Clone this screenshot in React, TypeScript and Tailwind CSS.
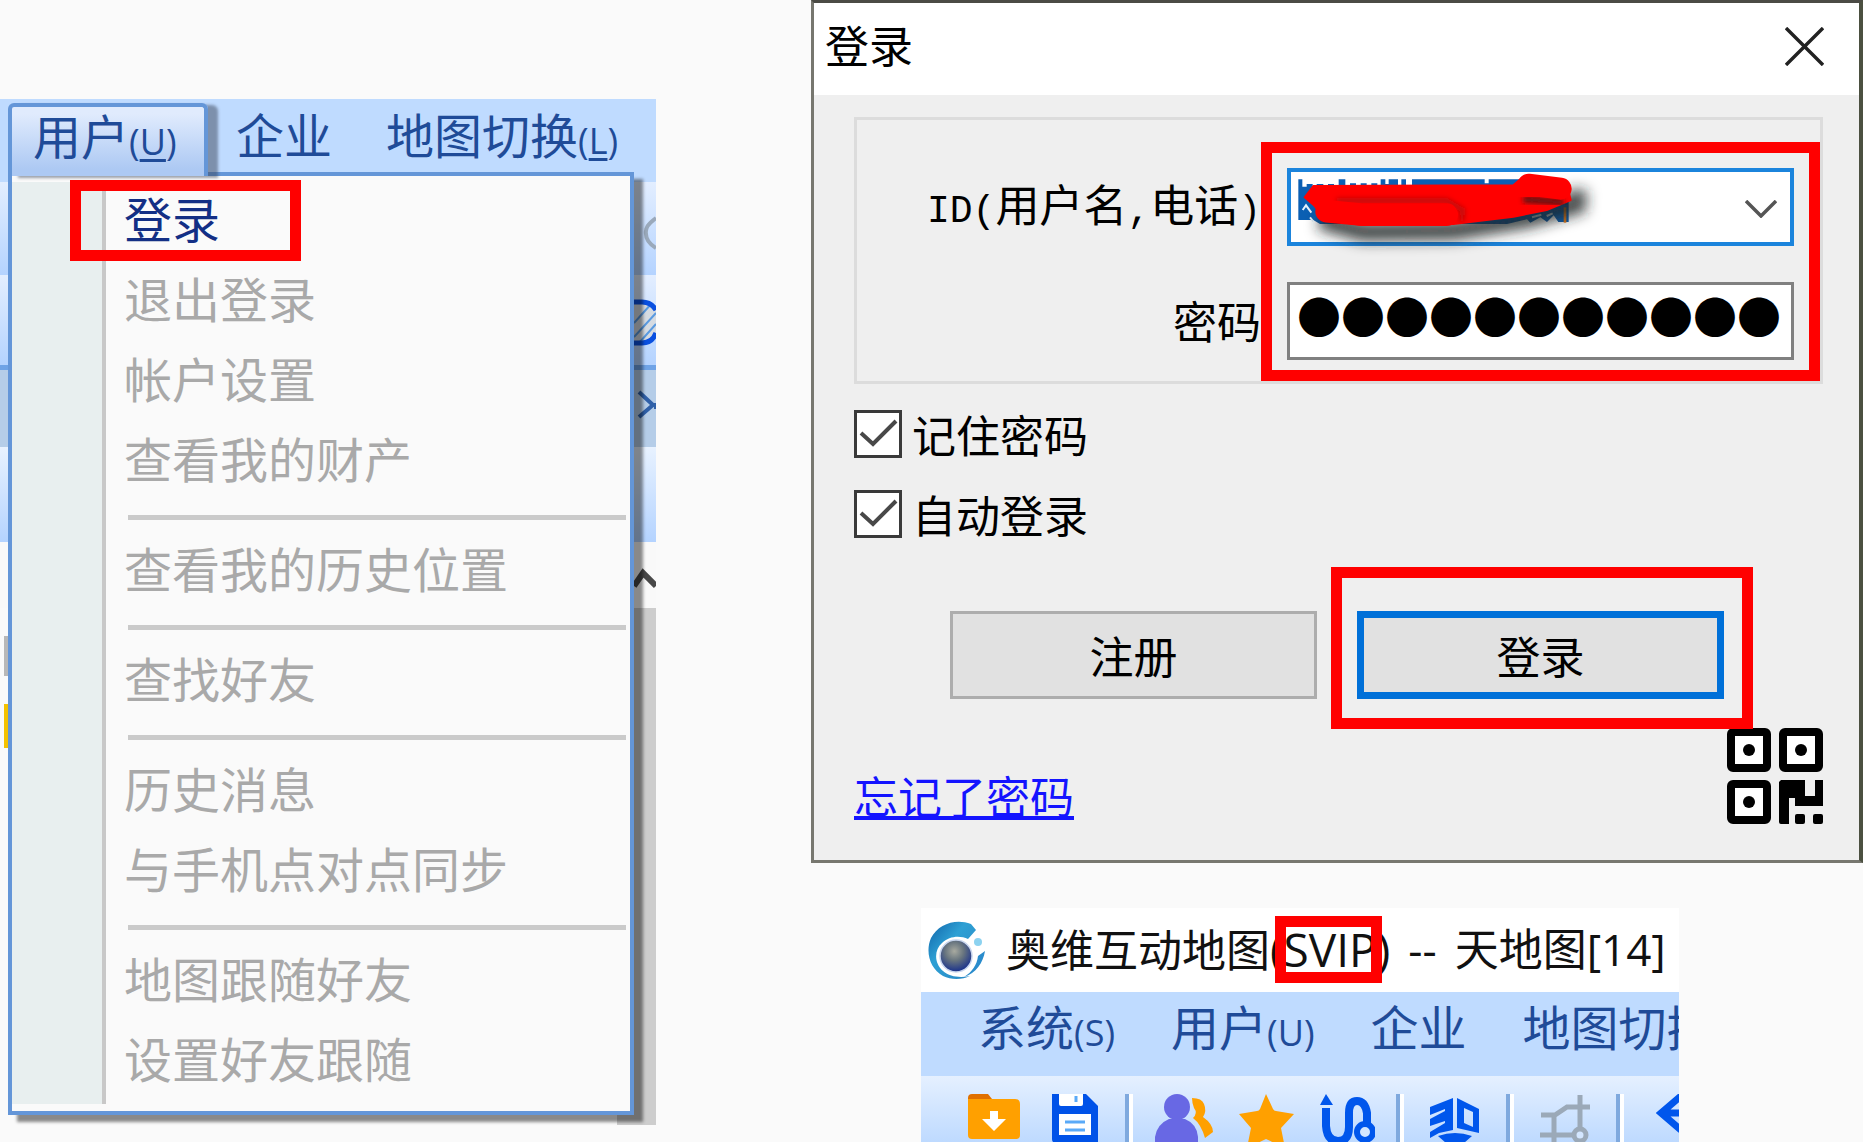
import type { ReactNode } from "react";
import { clsx } from "clsx";

const FONT = "font-['Open_Sans','Noto_Sans_CJK_SC',sans-serif]";
const CJK = "font-['Noto_Sans_CJK_SC',sans-serif]";

type MenuEntry = { label: string; disabled?: boolean; highlighted?: boolean } | "separator";

const userMenu: MenuEntry[] = [
  { label: "登录", highlighted: true },
  { label: "退出登录", disabled: true },
  { label: "帐户设置", disabled: true },
  { label: "查看我的财产", disabled: true },
  "separator",
  { label: "查看我的历史位置", disabled: true },
  "separator",
  { label: "查找好友", disabled: true },
  "separator",
  { label: "历史消息", disabled: true },
  { label: "与手机点对点同步", disabled: true },
  "separator",
  { label: "地图跟随好友", disabled: true },
  { label: "设置好友跟随", disabled: true },
];

function RedFrame({ className }: { className: string }) {
  return <div aria-hidden className={clsx("pointer-events-none absolute z-20 border-[11px] border-[#ff0000]", className)} />;
}

function MenuLabel({ text, hotkey, underline }: { text: string; hotkey?: string; underline?: boolean }) {
  return (
    <span className="flex items-baseline whitespace-nowrap text-[48px] leading-[60px] text-[#1f4b98]">
      {text}
      {hotkey && (
        <span className="text-[36px]">
          (<span className={clsx(underline && "underline decoration-[3px] underline-offset-4")}>{hotkey}</span>)
        </span>
      )}
    </span>
  );
}

// What stays visible of the main window behind the open menu
function Backdrop() {
  return (
    <div aria-hidden className="absolute inset-0 flex flex-col">
      <div className="h-[83px] bg-[#bfdbff]" />
      <div className="flex h-[93px] justify-end bg-linear-to-b from-[#e3eeff] to-[#b4d3ff]">
        <svg className="h-full w-[22px]" viewBox="0 0 22 93" fill="none">
          <path d="M22 36C14 42 11 46 12 52c0 7 5 11 10 14" stroke="#9aa9bb" strokeWidth="4" />
        </svg>
      </div>
      <div className="flex h-[90px] justify-end bg-linear-to-b from-[#e3eeff] to-[#b4d3ff]">
        <svg className="h-full w-[22px]" viewBox="0 0 22 90" fill="none">
          <path d="M0 27h10c6 0 9 2 12 5v30c-3 5-8 7-12 7H0z" fill="#d5dbe2" />
          <path d="M0 48 18 28M0 62 22 38M5 68 22 49" stroke="#5a9ae0" strokeWidth="2" />
          <path d="M0 27h8c7 0 11 3 14 8M22 58c-3 8-9 10-14 10H0" stroke="#0a50e0" strokeWidth="5" />
        </svg>
      </div>
      <div className="flex h-[82px] justify-end border-t-[5px] border-[#6fa3e6] bg-[#b5cde8]">
        <svg className="h-full w-[22px]" viewBox="0 0 22 77" fill="none">
          <path d="M5 22 19 35 5 47M22 33v6" stroke="#2f60a8" strokeWidth="4" />
        </svg>
      </div>
      <div className="h-[95px] bg-linear-to-b from-[#e8f2ff] to-[#b4d3ff]" />
      <div className="flex h-[66px] justify-end bg-[#f9f9f9]">
        <svg className="h-full w-[22px]" viewBox="0 0 22 66" fill="none">
          <path d="M0 44 9 31 22 44" stroke="#484848" strokeWidth="6" />
        </svg>
      </div>
      <div className="flex flex-1 items-start justify-between">
        <div className="flex flex-col items-end pt-7">
          <div className="h-10 w-2 border-r-4 border-[#b8b8b8]" />
          <div className="mt-7 h-11 w-2 border-r-4 border-[#f5c200]" />
        </div>
        <div className="h-full w-[39px] bg-[#cdcdcd]" />
      </div>
    </div>
  );
}

function UserMenu() {
  return (
    <section className="relative mt-[99px] self-start pb-[10px] pl-2 pr-[22px]">
      <Backdrop />
      <nav className="relative z-10 flex h-[73px] items-start">
        <button
          type="button"
          className="mt-1 flex h-[73px] w-[200px] shrink-0 items-start rounded-t-md border-4 border-b-0 border-[#6496d8] bg-linear-to-b from-[#e0ebfd] from-10% to-[#adc9f3] to-90% pl-[21px] shadow-[10px_2px_3px_rgba(60,70,90,0.5)]"
        >
          <MenuLabel text="用户" hotkey="U" underline />
        </button>
        <button type="button" className="ml-7 pt-[7px]">
          <MenuLabel text="企业" />
        </button>
        <button type="button" className="ml-[54px] pt-[7px]">
          <MenuLabel text="地图切换" hotkey="L" underline />
        </button>
      </nav>
      <div className="relative flex border-4 border-[#6496d8] bg-[#fafafa] pb-[7px] pt-1 shadow-[9px_7px_3px_rgba(0,0,0,0.45)]">
        <div aria-hidden className="mt-[2px] w-[94px] shrink-0 border-r-[4px] border-[#c8c8c8] bg-[#e8efef]" />
        <ul className="flex-1 pb-1">
          {userMenu.map((entry, i) =>
            entry === "separator" ? (
              <li key={i} role="separator" className="h-[30px] pl-[22px] pr-1 pt-[15px]">
                <div className="h-[5px] bg-[#cacaca]" />
              </li>
            ) : (
              <li key={i} className="relative h-20">
                <button
                  type="button"
                  disabled={entry.disabled}
                  className={clsx(
                    "h-full w-full whitespace-nowrap pl-[18px] text-left text-[48px] leading-[80px]",
                    entry.disabled ? "text-[#a9a9a9]" : "text-[#132f85]",
                  )}
                >
                  {entry.label}
                </button>
                {entry.highlighted && <RedFrame className="-left-9 top-0 h-[81px] w-[231px]" />}
              </li>
            ),
          )}
        </ul>
      </div>
    </section>
  );
}

function Scribble() {
  return (
    <svg aria-hidden className="pointer-events-none absolute -left-[7px] -top-2 h-[100px] w-80 overflow-visible" viewBox="0 0 960 300">
      <defs>
        <filter id="soft" x="-20%" y="-80%" width="140%" height="280%">
          <feGaussianBlur stdDeviation="20" />
        </filter>
        <filter id="fold" x="-30%" y="-60%" width="160%" height="220%">
          <feGaussianBlur stdDeviation="8" />
        </filter>
      </defs>
      <path
        d="M55 58h12v22h13v-8h18v8h12v-8h20v8h14v-8h18v8h14V58h20v20h14v-8h18v8h14v-8h18v8h14v-8h18v8h10V58h14v14h10V58h28v18h10V58h14v18h18V58h218v12h12V58h100v20h140v108H835l-14-20-20 20-20-14-30 16-10-10-60 14H120l-20-12H55z"
        fill="#0b5fb3"
      />
      <path d="M68 150l10-14 16 22M90 172l10 12M756 172l28-8M800 168l18-8" stroke="#e8f2fb" strokeWidth="6" fill="none" />
      <rect x="851" y="142" width="8" height="46" fill="#e07a1a" />
      <path d="M120 180 250 216 520 212 740 176 890 134 892 90" stroke="#1c2424" strokeOpacity="0.85" strokeWidth="56" fill="none" filter="url(#soft)" />
      <path d="M100 78 700 76 730 50 860 70 872 120 800 150 700 170 520 192 240 194 140 180 100 134 74 112Z" fill="#ff0000" stroke="#ff0000" strokeWidth="6" strokeLinejoin="round" />
      <path d="M170 122 500 122 548 150 545 184" stroke="#a01010" strokeWidth="14" strokeOpacity="0.75" fill="none" filter="url(#fold)" />
      <path d="M730 118 840 126 850 128" stroke="#401818" strokeWidth="20" strokeOpacity="0.85" fill="none" filter="url(#fold)" />
      <path d="M140 154 250 164 500 164" stroke="#ff0000" strokeWidth="68" strokeLinecap="round" strokeLinejoin="round" fill="none" />
      <path d="M746 74 842 86" stroke="#ff0000" strokeWidth="66" strokeLinecap="round" />
    </svg>
  );
}

function CheckOption({ id, children }: { id: string; children: ReactNode }) {
  return (
    <div className="flex items-center gap-[10px]">
      <span className="relative h-12 w-12">
        <input id={id} type="checkbox" defaultChecked className="peer block h-12 w-12 appearance-none border-[3px] border-[#3a3a3a] bg-white" />
        <svg aria-hidden className="pointer-events-none absolute inset-0 hidden h-12 w-12 peer-checked:block" viewBox="0 0 48 48" fill="none">
          <path d="M7 23 19 34 42 11" stroke="#484848" strokeWidth="4" />
        </svg>
      </span>
      <label htmlFor={id} className="text-[44px] leading-[48px]">
        {children}
      </label>
    </div>
  );
}

function QrIcon() {
  return (
    <svg aria-hidden className="h-24 w-24" viewBox="0 0 96 96">
      <g fill="#fff" stroke="#000" strokeWidth="8">
        <rect x="4" y="4" width="36" height="36" rx="2" />
        <rect x="56" y="4" width="36" height="36" rx="2" />
        <rect x="4" y="56" width="36" height="36" rx="2" />
      </g>
      <circle cx="22" cy="22" r="6" />
      <circle cx="74" cy="22" r="6" />
      <circle cx="22" cy="74" r="6" />
      <path d="M54 52h24v16h10V52h8v26H68v-8h-6v26h-8a2 2 0 0 1-2-2V54z" />
      <rect x="68" y="86" width="10" height="10" rx="2" />
      <rect x="86" y="86" width="10" height="10" rx="2" />
    </svg>
  );
}

function LoginDialog() {
  return (
    <form className={clsx("border-[3px] border-r-4 border-[#77776f] border-t-[#4b4b45] border-r-[#4b5040] bg-[#efefef] text-black", CJK)}>
      <header className="flex h-[92px] items-start justify-between bg-white pl-[11px] pr-[35px]">
        <h1 className="pt-[11px] text-[44px] leading-[60px]">登录</h1>
        <button type="button" aria-label="关闭" className="pt-6">
          <svg className="h-[39px] w-[39px]" viewBox="0 0 39 39" fill="none">
            <path d="M1 1 38 38M38 1 1 38" stroke="#222" strokeWidth="3.4" />
          </svg>
        </button>
      </header>

      <div className="pb-9 pl-10 pr-[36px] pt-[22px]">
        <fieldset className="flex justify-end gap-[26px] border-[3px] border-[#dcdcdc] pb-[21px] pr-[26px] pt-12">
          <div className="flex flex-col items-end gap-9 whitespace-nowrap text-[44px]">
            <label htmlFor="account" className="h-[78px] leading-[70px]">
              <span className="font-['Liberation_Mono',monospace] text-[38px]">ID(</span>用户名
              <span className="font-['Liberation_Mono',monospace] text-[38px]">,</span>电话
              <span className="font-['Liberation_Mono',monospace] text-[38px]">)</span>
            </label>
            <label htmlFor="password" className="h-[78px] leading-[76px]">
              密码
            </label>
          </div>
          <div className="relative flex w-[507px] flex-col gap-9">
            <div className="relative h-[78px]">
              <select id="account" className="h-full w-full appearance-none border-4 border-[#1b84dc] bg-white" />
              <svg aria-hidden className="pointer-events-none absolute right-[17px] top-8 h-[18px] w-8" viewBox="0 0 32 18" fill="none">
                <path d="M1 1 16 16 31 1" stroke="#555" strokeWidth="3.5" />
              </svg>
              <Scribble />
            </div>
            <div className="relative h-[78px]">
              <input id="password" type="password" defaultValue="00000000000" className="h-full w-full border-[3px] border-[#808080] bg-white px-2 text-transparent" />
              <span aria-hidden className="pointer-events-none absolute inset-0 overflow-hidden pl-[10px] text-[44px] leading-[66px]">
                ●●●●●●●●●●●
              </span>
            </div>
            <RedFrame className="-bottom-[21px] -left-[26px] -right-[26px] -top-[26px]" />
          </div>
        </fieldset>

        <div className="mt-[26px] flex flex-col gap-8">
          <CheckOption id="remember">记住密码</CheckOption>
          <CheckOption id="auto-login">自动登录</CheckOption>
        </div>

        <div className="mt-[73px] grid grid-cols-2 gap-10 pl-24 pr-[99px] text-[44px] leading-[70px]">
          <button type="button" className="h-[88px] border-[3px] border-[#adadad] bg-[#e1e1e1]">
            注册
          </button>
          <div className="relative h-[88px]">
            <button type="submit" className="h-full w-full border-[7px] border-[#0070d8] bg-[#e1e1e1]">
              登录
            </button>
            <RedFrame className="-bottom-[30px] -left-[26px] -right-[29px] -top-11" />
          </div>
        </div>

        <div className="mt-[29px] flex items-end justify-between">
          <a href="#forgot" className="text-[44px] leading-[58px] text-[#1414ff] underline decoration-4 underline-offset-2">
            忘记了密码
          </a>
          <button type="button" aria-label="扫码登录">
            <QrIcon />
          </button>
        </div>
      </div>
    </form>
  );
}

function GlobeLogo() {
  return (
    <svg aria-hidden className="h-[58px] w-[58px]" viewBox="0 0 58 58">
      <defs>
        <radialGradient id="earth" cx="45%" cy="35%" r="65%">
          <stop offset="0" stopColor="#a8aaa0" />
          <stop offset="0.45" stopColor="#68757f" />
          <stop offset="1" stopColor="#18308c" />
        </radialGradient>
        <linearGradient id="swoosh" x1="0" y1="0" x2="1" y2="1">
          <stop offset="0" stopColor="#0f62a8" />
          <stop offset="0.4" stopColor="#2ea0d4" />
          <stop offset="1" stopColor="#2a86c4" />
        </linearGradient>
      </defs>
      <path d="M43 3C28-3 10 3 3 17c-6 14-1 31 12 38 8 4 19 4 27 0-10 2-20 1-27-5C6 42 6 29 14 22c7-7 18-8 26-4l8-9z" fill="url(#swoosh)" />
      <path d="M57 30c-2 12-9 22-21 26 8-5 13-12 14-21z" fill="#2a8ccc" />
      <circle cx="28" cy="35" r="16" fill="url(#earth)" stroke="#c9d6ee" strokeWidth="1.5" />
      <circle cx="50" cy="21" r="4" fill="#8cd2f0" />
    </svg>
  );
}

function ToolSeparator() {
  return <div className="h-full w-[8px] shrink-0 border-l-4 border-r-4 border-l-[#7fa9de] border-r-white" />;
}

// Drawn as one strip so the icons keep their spacing while the window edge cuts them off
function Toolbar() {
  return (
    <div className="flex h-[66px] overflow-hidden bg-linear-to-b from-[#e5f0ff] to-[#bedaff] pl-[47px] pt-[18px]">
      <svg className="h-[49px] w-[52px] shrink-0" viewBox="0 0 52 49">
        <path d="M0 4q0-4 4-4h16l4 5H0z" fill="#e07000" />
        <path d="M0 5h47q5 0 5 5v31q0 4-4 4H4q-4 0-4-4z" fill="#ffa000" />
        <path d="M22 17h8v8h8L26 37 14 25h8z" fill="#fff" />
      </svg>
      <svg className="ml-8 h-[49px] w-[46px] shrink-0" viewBox="0 0 46 49">
        <path d="M0 0h34l12 12v37H4q-4 0-4-4z" fill="#0052e8" />
        <path d="M7 0h24v10q0 2-2 2H9q-2 0-2-2zM7 20h32v21H7z" fill="#fff" />
        <path d="M24 2v6M13 28h20M13 36h20" stroke="#5aaaf8" strokeWidth="3" />
      </svg>
      <div className="ml-[27px]">
        <ToolSeparator />
      </div>
      <svg className="ml-[22px] h-[49px] w-[58px] shrink-0" viewBox="0 0 58 49">
        <path d="M37 4q10 0 12 6 3 7-1 13 10 7 10 15l-8 6q-4-14-12-20 5-5 1-10-2-5-2-10" fill="#ffa000" />
        <circle cx="22" cy="13" r="13" fill="#6868e4" />
        <path d="M0 49V43q2-13 14-18h16q12 5 13 18v6z" fill="#6868e4" />
      </svg>
      <svg className="ml-[26px] h-[49px] w-[55px] shrink-0" viewBox="0 0 55 49">
        <path d="m27 0 7 15q1 2 3 2l18 3-13 14 4 20-19-9-19 9 4-20L0 20l18-3q2 0 3-2z" fill="#ffa000" />
      </svg>
      <svg className="ml-[26px] h-[49px] w-[55px] shrink-0" viewBox="0 0 55 49" fill="none">
        <path d="M6 14v18q1 15 12 15t11-14V19Q29 7 37 7t10 12v14" stroke="#0056ec" strokeWidth="8" />
        <path d="m0 11 6-11 7 11z" fill="#0056ec" />
        <circle cx="45" cy="38" r="8" stroke="#0056ec" strokeWidth="6" fill="#d3e6ff" />
      </svg>
      <div className="ml-[21px]">
        <ToolSeparator />
      </div>
      <svg className="ml-[26px] h-[49px] w-[50px] shrink-0" viewBox="0 0 50 49">
        <path d="M23 4v32L9 39 0 44v-6l15-9v-2L0 32v-7l15-8v-2L0 21v-8z" fill="#0056ec" />
        <path d="m27 4 22 11v24L27 34zm7 10v15l9 4V18z" fill="#0056ec" fillRule="evenodd" />
        <path d="M8 42q17-6 34 0l-8 7H16z" fill="#0056ec" />
      </svg>
      <div className="ml-[26px]">
        <ToolSeparator />
      </div>
      <svg className="ml-[26px] h-[49px] w-[50px] shrink-0" viewBox="0 0 50 49" fill="none" stroke="#9ba9b8" strokeWidth="5">
        <path d="M40 1v36M1 21h14l12-8h23M14 21v28M0 41h34" />
        <circle cx="40" cy="41" r="6" fill="#d3e6ff" />
      </svg>
      <div className="ml-[26px]">
        <ToolSeparator />
      </div>
      <svg className="ml-8 h-[49px] w-[50px] shrink-0" viewBox="0 0 50 49" fill="none">
        <path d="M25 2 5 19l20 17M5 19h40" stroke="#0056ec" strokeWidth="7" />
      </svg>
    </div>
  );
}

function MapWindow() {
  return (
    <section className="ml-[110px] mt-[45px] w-[758px] overflow-hidden">
      <header className="flex h-[84px] items-center bg-white pl-[7px]">
        <GlobeLogo />
        <p className="flex items-center gap-[18px] whitespace-nowrap pb-[2px] pl-[20px] text-[44px] leading-[60px] text-[#111]">
          <span className="relative">
            奥维互动地图<span className="text-[46px]">(SVIP)</span>
            <RedFrame className="-top-[3px] right-2 h-[67px] w-[107px]" />
          </span>
          <span>--</span>
          <span>天地图[14]</span>
        </p>
      </header>
      <nav className="flex h-[84px] gap-14 overflow-hidden bg-[#bfdbff] pl-[57px] pt-[6px]">
        <button type="button" className="self-start">
          <MenuLabel text="系统" hotkey="S" />
        </button>
        <button type="button" className="self-start">
          <MenuLabel text="用户" hotkey="U" />
        </button>
        <button type="button" className="self-start">
          <MenuLabel text="企业" />
        </button>
        <button type="button" className="self-start">
          <MenuLabel text="地图切换" />
        </button>
      </nav>
      <Toolbar />
    </section>
  );
}

export default function App() {
  return (
    <main className={clsx("grid min-h-screen grid-cols-[656fr_155fr_1052fr] overflow-hidden bg-[#fafafa]", FONT)}>
      <UserMenu />
      <div />
      <div>
        <LoginDialog />
        <MapWindow />
      </div>
    </main>
  );
}
